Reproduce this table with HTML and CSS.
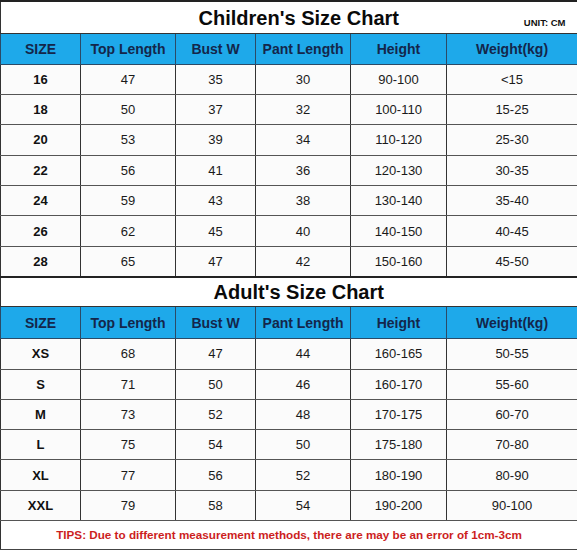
FILE: index.html
```html
<!DOCTYPE html>
<html>
<head>
<meta charset="utf-8">
<link rel="stylesheet" href="styles.css">
</head>
<body>
<table class="chart">
  <colgroup>
    <col class="c1"><col class="c2"><col class="c3"><col class="c4"><col class="c5"><col class="c6">
  </colgroup>
  <tbody>
    <tr class="title-row t1">
      <td colspan="6" class="title-cell"><span class="title">Children's Size Chart</span><span class="unit">UNIT: CM</span></td>
    </tr>
    <tr class="head-row">
      <th>SIZE</th><th>Top Length</th><th>Bust W</th><th>Pant Length</th><th>Height</th><th>Weight(kg)</th>
    </tr>
    <tr class="row k"><td class="size">16</td><td>47</td><td>35</td><td>30</td><td>90-100</td><td>&lt;15</td></tr>
    <tr class="row k"><td class="size">18</td><td>50</td><td>37</td><td>32</td><td>100-110</td><td>15-25</td></tr>
    <tr class="row k"><td class="size">20</td><td>53</td><td>39</td><td>34</td><td>110-120</td><td>25-30</td></tr>
    <tr class="row k"><td class="size">22</td><td>56</td><td>41</td><td>36</td><td>120-130</td><td>30-35</td></tr>
    <tr class="row k"><td class="size">24</td><td>59</td><td>43</td><td>38</td><td>130-140</td><td>35-40</td></tr>
    <tr class="row k"><td class="size">26</td><td>62</td><td>45</td><td>40</td><td>140-150</td><td>40-45</td></tr>
    <tr class="row k last"><td class="size">28</td><td>65</td><td>47</td><td>42</td><td>150-160</td><td>45-50</td></tr>
    <tr class="title-row t2">
      <td colspan="6" class="title-cell"><span class="title">Adult's Size Chart</span></td>
    </tr>
    <tr class="head-row h2">
      <th>SIZE</th><th>Top Length</th><th>Bust W</th><th>Pant Length</th><th>Height</th><th>Weight(kg)</th>
    </tr>
    <tr class="row a"><td class="size">XS</td><td>68</td><td>47</td><td>44</td><td>160-165</td><td>50-55</td></tr>
    <tr class="row a"><td class="size">S</td><td>71</td><td>50</td><td>46</td><td>160-170</td><td>55-60</td></tr>
    <tr class="row a"><td class="size">M</td><td>73</td><td>52</td><td>48</td><td>170-175</td><td>60-70</td></tr>
    <tr class="row a"><td class="size">L</td><td>75</td><td>54</td><td>50</td><td>175-180</td><td>70-80</td></tr>
    <tr class="row a"><td class="size">XL</td><td>77</td><td>56</td><td>52</td><td>180-190</td><td>80-90</td></tr>
    <tr class="row a"><td class="size">XXL</td><td>79</td><td>58</td><td>54</td><td>190-200</td><td>90-100</td></tr>
    <tr class="tips-row">
      <td colspan="6" class="tips">TIPS: Due to different measurement methods, there are may be an error of 1cm-3cm</td>
    </tr>
  </tbody>
</table>
</body>
</html>
```

FILE: styles.css
```css
html, body {
  margin: 0;
  padding: 0;
  background: #ffffff;
}

.chart {
  width: 577px;
  border-collapse: collapse;
  table-layout: fixed;
  font-family: "Liberation Sans", Arial, sans-serif;
  color: #111;
}

.c1 { width: 80px; }
.c2 { width: 95px; }
.c3 { width: 80px; }
.c4 { width: 95px; }
.c5 { width: 96px; }
.c6 { width: 131px; }

.chart td, .chart th {
  padding: 0;
  text-align: center;
  vertical-align: middle;
  border: 1px solid #555;
  border-left-color: #333;
  border-right-color: #333;
}

.title-row td {
  background: #fff;
  border-top: 2px solid #222;
  border-left: 1px solid #333;
  border-right: 2px solid #333;
  border-bottom: 1px solid #333;
  position: relative;
}

.t1 { height: 32px; }
.t1 .title { padding-top: 2px; }
.t2 { height: 30px; }
.t2 .title { padding-top: 2px; }

.title {
  display: inline-block;
  padding-left: 20px;
  font-size: 20px;
  font-weight: bold;
  color: #0a0a0a;
}

.unit {
  position: absolute;
  right: 11px;
  top: 15px;
  font-size: 9.5px;
  font-weight: bold;
  color: #111;
}

.head-row { height: 31px; }
.head-row.h2 { height: 32px; }

.head-row th {
  background: #1ea9ea;
  color: #14264a;
  font-size: 14px;
  font-weight: bold;
  border-color: #2b4a66;
}

.row td {
  background: #fbfbfb;
  font-size: 13px;
  color: #1a1a1a;
}

.row.k { height: 30.4px; }
.row.a { height: 30.3px; }

.row td.size {
  font-weight: bold;
  color: #111;
}

.row.last td { border-bottom: 2px solid #222; }

.tips-row { height: 29px; }

.tips {
  background: #fff;
  color: #cc1e1e;
  font-size: 11.7px;
  font-weight: bold;
  border-top: 1px solid #999 !important;
  border-bottom: 2px solid #444 !important;
}
```
